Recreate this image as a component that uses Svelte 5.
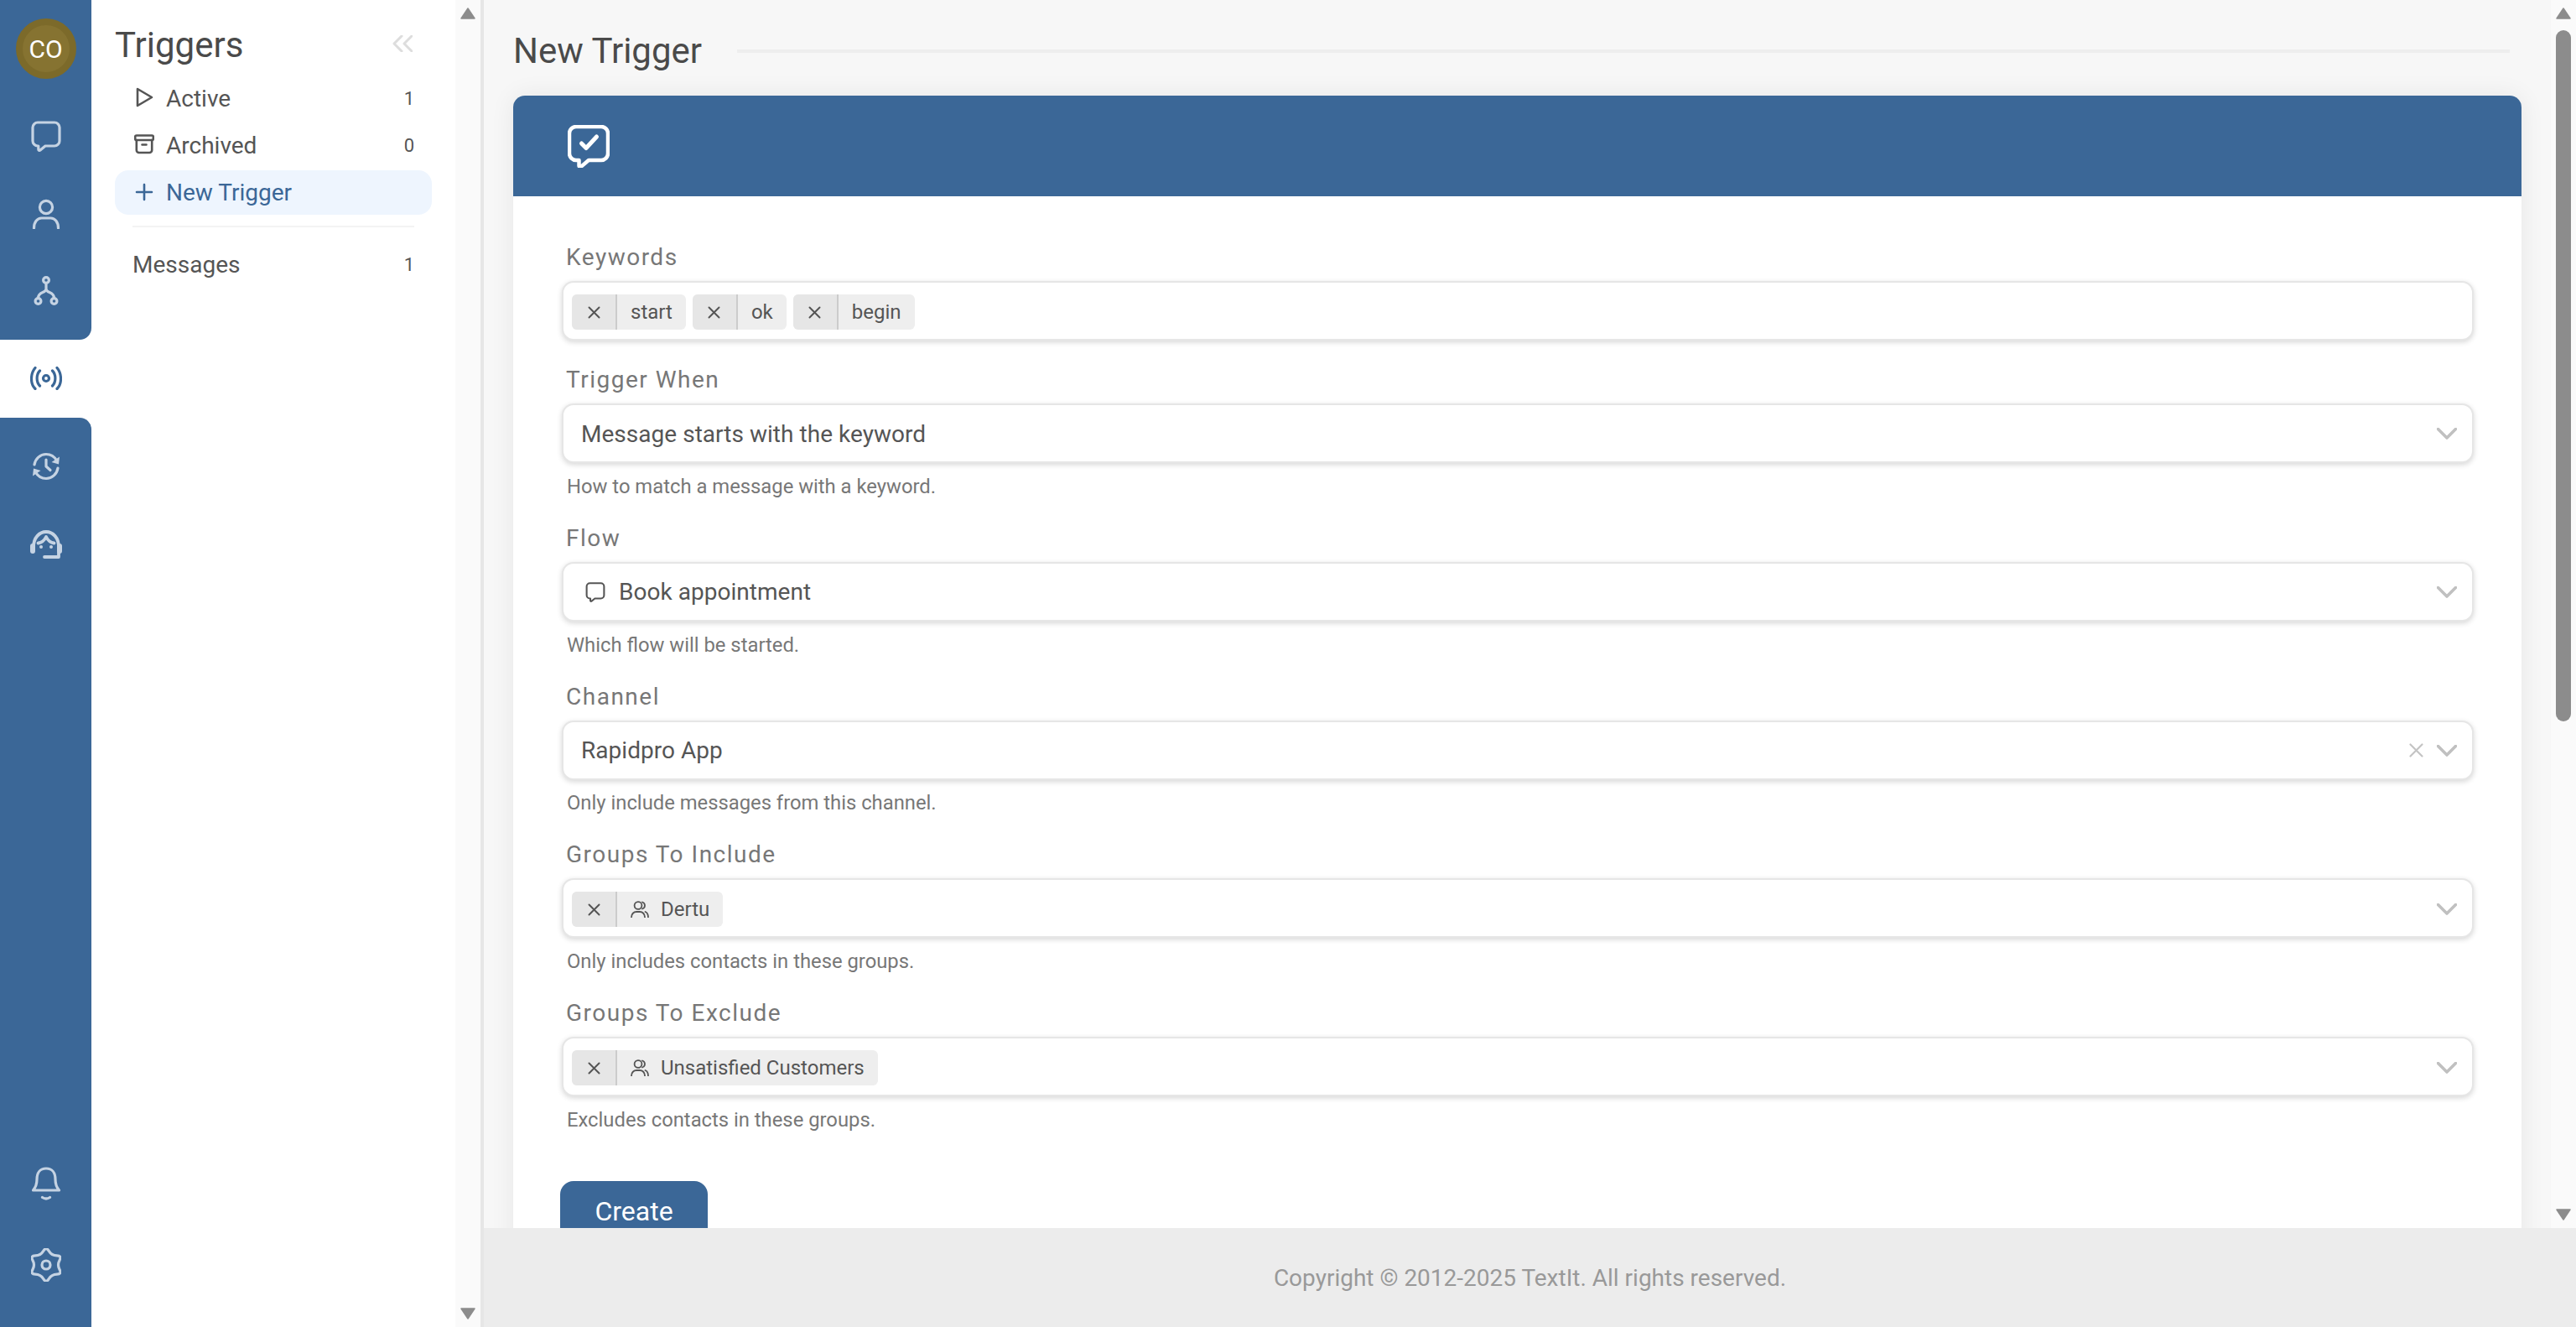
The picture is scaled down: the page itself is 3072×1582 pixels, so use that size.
<script lang="ts">
  // New Trigger page: icon rail, section menu, and the trigger form
  const fields = [
    { label: 'Keywords', chips: [{ text: 'start' }, { text: 'ok' }, { text: 'begin' }], noArrow: true },
    { label: 'Trigger When', value: 'Message starts with the keyword', help: 'How to match a message with a keyword.' },
    { label: 'Flow', value: 'Book appointment', flowIcon: true, help: 'Which flow will be started.' },
    { label: 'Channel', value: 'Rapidpro App', clear: true, help: 'Only include messages from this channel.' },
    { label: 'Groups To Include', chips: [{ text: 'Dertu', group: true }], help: 'Only includes contacts in these groups.' },
    { label: 'Groups To Exclude', chips: [{ text: 'Unsatisfied Customers', group: true }], help: 'Excludes contacts in these groups.' }
  ]

  // six lobed gear outline, as a quadratic spline through lobe/valley control points
  function gearPath(cx: number, cy: number, outer: number, inner: number) {
    const pts: number[][] = []
    for (let i = 0; i < 12; i++) {
      const r = i % 2 ? inner : outer
      const a = (i * Math.PI) / 6 - Math.PI / 2
      pts.push([cx + r * Math.cos(a), cy + r * Math.sin(a)])
    }
    const mid = (p: number[], q: number[]) => [(p[0] + q[0]) / 2, (p[1] + q[1]) / 2]
    const start = mid(pts[11], pts[0])
    let d = `M${start[0].toFixed(2)} ${start[1].toFixed(2)}`
    pts.forEach((p, i) => {
      const m = mid(p, pts[(i + 1) % 12])
      d += `Q${p[0].toFixed(2)} ${p[1].toFixed(2)} ${m[0].toFixed(2)} ${m[1].toFixed(2)}`
    })
    return d + 'Z'
  }
</script>

<div class="app">
  <nav class="rail">
    <div class="rail-top">
      <div class="avatar"><span>CO</span></div>
      <div class="rail-item">
        <svg width="36" height="37" viewBox="0 0 36 37"><path d="M8 2h20a6 6 0 0 1 6 6v16a6 6 0 0 1-6 6H17l-6 5c-1 .8-2.2.2-2.2-1v-4H8a6 6 0 0 1-6-6V8a6 6 0 0 1 6-6z" /></svg>
      </div>
      <div class="rail-item">
        <svg width="36" height="36" viewBox="0 0 36 36"><circle cx="18" cy="10" r="7.6" /><path d="M3.5 35c0-7.500 4-12 9-12h11c5 0 9 4.500 9 12" /></svg>
      </div>
      <div class="rail-item">
        <svg width="36" height="36" viewBox="0 0 36 36"><circle cx="18" cy="5" r="3.400" /><circle cx="8.500" cy="30" r="3.400" /><circle cx="27.500" cy="30" r="3.400" /><path d="M18 8.500v7c0 2-1.500 3-4 4s-5.500 3-5.500 7M18 15.500c0 2 1.500 3 4 4s5.500 3 5.500 7" /></svg>
      </div>
    </div>
    <div class="rail-active">
      <svg width="38" height="28" viewBox="0 0 38 28"><circle cx="19" cy="14" r="3.500" /><path d="M11.500 5C7 9.500 7 18.500 11.500 23M26.500 5c4.500 4.500 4.500 13.500 0 18M6 1.500C.500 8-.500 20 6 26.500M32 1.500c5.500 6.500 6.500 18.500 0 25" /></svg>
    </div>
    <div class="rail-rest">
      <div class="rail-item">
        <svg width="34" height="34" viewBox="0 0 34 34"><path d="M3 15C4 8 10 2.500 17 2.500c5.500 0 10 3 12.500 7.500M31 19c-1 7-7 12.500-14 12.500-5.500 0-10-3-12.500-7.500M17 9v8l5 4.500" /><path class="solid" d="M33 5.500l-1 9-8.500-2.500zM1 28.500l1-9 8.500 2.500z" /></svg>
      </div>
      <div class="rail-item">
        <svg class="support" width="38" height="34" viewBox="0 0 38 34"><path d="M4 20C4 9 11 2 19 2s15 7 15 18M34 26v6H17M9.500 15.500c4-.5 7.500-3.500 9.500-7.500 2 4 5.500 7 9.500 7.500" /><rect class="solid" x="0" y="16" width="6" height="12" rx="3" /><rect class="solid" x="32" y="16" width="6" height="12" rx="3" /><circle class="solid" cx="13" cy="20" r="2" /><circle class="solid" cx="25" cy="20" r="2" /></svg>
      </div>
      <div class="rail-bottom">
        <div class="rail-item tall">
          <svg width="36" height="40" viewBox="0 0 36 40"><path d="M2.500 28C6 24 7 21 7 15 7 7 11 2 18 2s11 5 11 13c0 6 1 9 4.500 13zM13.500 36.500c3 2 6 2 9 0" /></svg>
        </div>
        <div class="rail-item tall">
          <svg width="36" height="40" viewBox="0 0 36 40"><path d={gearPath(18, 20, 22, 13)} /><circle cx="18" cy="20" r="5" /></svg>
        </div>
      </div>
    </div>
  </nav>

  <aside class="side">
    <div class="side-body">
      <div class="side-title">
        <h2>Triggers</h2>
        <svg width="24" height="20" viewBox="0 0 24 20"><path d="M11 1L2 10l9 9M23 1l-9 9 9 9" /></svg>
      </div>
      <div class="menu-item">
        <span class="menu-icon"><svg width="24" height="24" viewBox="0 0 24 24"><path d="M4 2l17 10-17 10z" /></svg></span>
        <span class="menu-name">Active</span>
        <span class="count">1</span>
      </div>
      <div class="menu-item">
        <span class="menu-icon"><svg width="24" height="24" viewBox="0 0 24 24"><rect x="1.200" y="1.500" width="21.600" height="5.500" rx="1.500" /><path d="M2.800 7v12a3 3 0 0 0 3 3h12.400a3 3 0 0 0 3-3V7M9.500 12.500h5" /></svg></span>
        <span class="menu-name">Archived</span>
        <span class="count">0</span>
      </div>
      <div class="menu-item selected">
        <span class="menu-icon"><svg width="24" height="24" viewBox="0 0 24 24"><path d="M12 3v18M3 12h18" /></svg></span>
        <span class="menu-name">New Trigger</span>
      </div>
      <div class="side-divider"></div>
      <div class="menu-item plain">
        <span class="menu-name">Messages</span>
        <span class="count">1</span>
      </div>
    </div>
    <div class="vscroll">
      <svg class="arrow" width="18" height="14" viewBox="0 0 18 14"><path d="M9 1L17 13H1z" /></svg>
      <div class="grow"></div>
      <svg class="arrow" width="18" height="14" viewBox="0 0 18 14"><path d="M9 13L1 1h16z" /></svg>
    </div>
  </aside>

  <div class="main">
    <div class="main-view">
      <div class="main-content">
        <div class="page-title">
          <h1>New Trigger</h1>
          <div class="title-line"></div>
        </div>
        <section class="card">
          <header class="card-head">
            <svg width="50" height="51" viewBox="0 0 50 51"><path d="M10 2h30a8 8 0 0 1 8 8v24a8 8 0 0 1-8 8H25l-9 7.600c-1 .8-2.500.2-2.500-1V42H10a8 8 0 0 1-8-8V10a8 8 0 0 1 8-8z" /><path class="tick" d="M16.500 22l5.500 5.500L34.500 14" /></svg>
          </header>
          <form class="card-body">
            {#each fields as f}
              <div class="field">
                <div class="label">{f.label}</div>
                <div class="input" class:chipped={f.chips}>
                  {#if f.chips}
                    {#each f.chips as c}
                      <span class="chip">
                        <span class="chip-x"><svg width="15" height="15" viewBox="0 0 15 15"><path d="M1.500 1.500l12 12M13.500 1.500l-12 12" /></svg></span>
                        <span class="chip-text">
                          {#if c.group}
                            <svg width="22" height="20" viewBox="0 0 22 20"><circle cx="9" cy="5.500" r="4.400" /><path d="M1 19.500c0-4 2.800-6.500 6-6.500h4c3.200 0 6 2.500 6 6.500M14 1.500c2 .7 3 2.200 3 4s-1 3.300-3 4M17.500 13c2 .8 3.500 3 3.500 6.500" /></svg>
                          {/if}
                          {c.text}
                        </span>
                      </span>
                    {/each}
                  {:else}
                    {#if f.flowIcon}
                      <svg class="flow-icon" width="24" height="24" viewBox="0 0 36 37"><path d="M8 2h20a6 6 0 0 1 6 6v16a6 6 0 0 1-6 6H17l-6 5c-1 .8-2.200.2-2.200-1v-4H8a6 6 0 0 1-6-6V8a6 6 0 0 1 6-6z" /></svg>
                    {/if}
                    <span class="value">{f.value}</span>
                  {/if}
                  <span class="grow"></span>
                  {#if f.clear}
                    <svg class="clear" width="17" height="17" viewBox="0 0 17 17"><path d="M1.500 1.500l14 14M15.500 1.500l-14 14" /></svg>
                  {/if}
                  {#if !f.noArrow}
                    <svg class="chevron" width="24" height="14" viewBox="0 0 24 14"><path d="M1.500 1.500L12 12 22.500 1.500" /></svg>
                  {/if}
                </div>
                {#if f.help}<div class="help">{f.help}</div>{/if}
              </div>
            {/each}
            <button type="button" class="create">Create</button>
          </form>
        </section>
      </div>
      <div class="vscroll page">
        <svg class="arrow" width="18" height="14" viewBox="0 0 18 14"><path d="M9 1L17 13H1z" /></svg>
        <div class="thumb"></div>
        <div class="grow"></div>
        <svg class="arrow" width="18" height="14" viewBox="0 0 18 14"><path d="M9 13L1 1h16z" /></svg>
      </div>
    </div>
    <footer class="footer">Copyright © 2012-2025 TextIt. All rights reserved.</footer>
  </div>
</div>

<style>
  :global(body) { margin: 0; background: #fff; }
  .app { display: flex; width: 3072px; height: 1582px; overflow: hidden; font-family: Roboto, "Liberation Sans", sans-serif; font-size: 28px; color: #555; }
  .grow { flex: 1; }
  h1, h2 { margin: 0; font-weight: 400; font-size: 42px; line-height: 48px; color: #4a4a4a; }

  /* icon rail */
  .rail { width: 109px; flex: none; display: flex; flex-direction: column; }
  .rail svg { fill: none; stroke: #c5d3e3; stroke-width: 3.2; stroke-linecap: round; stroke-linejoin: round; }
  .rail svg .solid { fill: #c5d3e3; stroke: none; }
  .rail svg.support { stroke-width: 3.800; }
  .rail-top { height: 405px; box-sizing: border-box; padding-top: 22px; background: #3b6797; border-bottom-right-radius: 14px; }
  .avatar { width: 72px; height: 72px; margin: 0 auto 22px; box-sizing: border-box; border: 8px solid #7c6a2a; border-radius: 50%; background: #867331; color: #fff; display: flex; align-items: center; justify-content: center; font-size: 30px; }
  .rail-item { height: 92.5px; display: flex; align-items: center; justify-content: center; }
  .rail-item.tall { height: 97px; }
  .rail-active { height: 93px; padding-bottom: 1px; box-sizing: border-box; display: flex; align-items: center; justify-content: center; }
  .rail-active svg { stroke: #3b6797; }
  .rail-rest { flex: 1; display: flex; flex-direction: column; padding-top: 12px; background: #3b6797; border-top-right-radius: 14px; }
  .rail-bottom { margin-top: auto; padding-bottom: 26px; }

  /* section menu */
  .side { width: 468px; flex: none; box-sizing: border-box; display: flex; border-right: 4px solid #e6e6e6; }
  .side-body { flex: 1; box-sizing: border-box; padding: 30px 28px 0; }
  .side-title { display: flex; align-items: center; justify-content: space-between; padding-right: 23px; margin-bottom: 12.500px; }
  .side-title svg { margin-bottom: 4px; fill: none; stroke: #ddd; stroke-width: 3; stroke-linecap: round; stroke-linejoin: round; }
  .menu-item { height: 53px; margin-bottom: 3px; box-sizing: border-box; padding: 0 21px 0 23px; display: flex; align-items: center; border-radius: 16px; }
  .menu-item.selected { background: #eef5fe; color: #3b6797; }
  .menu-item.plain { padding-left: 21px; }
  .menu-icon { width: 24px; height: 24px; margin: 0 14px 3px 0; display: flex; }
  .menu-item.selected .menu-icon { margin-bottom: 0; }
  .menu-icon svg { fill: none; stroke: currentColor; stroke-width: 2.600; stroke-linecap: round; stroke-linejoin: round; }
  .menu-name { flex: 1; }
  .count { font-size: 22px; color: #555; }
  .side-divider { height: 2px; margin: 13px 21px 18px; background: #f3f3f3; }

  /* scrollbars */
  .vscroll { width: 30px; flex: none; box-sizing: border-box; padding: 9px 0 9px; display: flex; flex-direction: column; align-items: center; background: #fafafa; }
  .arrow { fill: #8c8c8c; stroke: #8c8c8c; stroke-width: 1.500; stroke-linejoin: round; flex: none; }
  .thumb { width: 18px; height: 824px; margin-top: 13px; border-radius: 9px; background: #8c8c8c; }

  /* page */
  .main { flex: 1; min-width: 0; display: flex; flex-direction: column; }
  .main-view { height: 1464px; flex: none; display: flex; overflow: hidden; }
  .main-content { flex: 1; min-width: 0; box-sizing: border-box; padding: 37px 35px 0; background: #f7f7f7; overflow: hidden; }
  .page-title { display: flex; align-items: center; gap: 42px; margin-bottom: 29px; padding-right: 14px; }
  .title-line { flex: 1; height: 4px; background: #eee; }
  .card { border-radius: 14px; background: #fff; box-shadow: 0 0 30px rgba(0, 0, 0, 0.07); }
  .card-head { height: 120px; box-sizing: border-box; padding-left: 65px; display: flex; align-items: center; background: #3b6797; border-radius: 14px 14px 0 0; }
  .card-head svg { fill: none; stroke: #fff; stroke-width: 4.500; stroke-linecap: round; stroke-linejoin: round; }
  .card-head svg .tick { stroke-width: 5; }
  .card-body { padding: 57px 57px 40px 58px; }

  /* form */
  .field { margin-bottom: 31px; }
  .label { padding-left: 5px; margin-bottom: 12px; line-height: 32px; letter-spacing: 1.500px; color: #777; }
  .input { height: 71px; box-sizing: border-box; padding: 1px 18px 0 21px; display: flex; align-items: center; gap: 8px; background: #fff; border: 2px solid #e6e6e6; border-radius: 14px; box-shadow: 0 2px 6px rgba(0, 0, 0, 0.16); }
  .input.chipped { padding: 3px 18px 0 10px; }
  .value { color: #555; letter-spacing: 0.030px; }
  .flow-icon { margin: 0 8px 0 5px; fill: none; stroke: #555; stroke-width: 3.200; stroke-linecap: round; stroke-linejoin: round; }
  .clear { margin-right: 8px; fill: none; stroke: #c4c4c4; stroke-width: 2.200; stroke-linecap: round; }
  .chevron { fill: none; stroke: #c0c0c0; stroke-width: 3.600; stroke-linecap: round; stroke-linejoin: round; }
  .chip { height: 42px; display: flex; font-size: 24px; border-radius: 6px; overflow: hidden; background: #eee; }
  .chip-x { width: 54px; box-sizing: border-box; display: flex; align-items: center; justify-content: center; background: #e6e6e6; border-right: 2px solid #ccc; }
  .chip-x svg { fill: none; stroke: #555; stroke-width: 2; stroke-linecap: round; }
  .chip-text { padding: 0 16px; display: flex; align-items: center; gap: 14px; }
  .chip-text svg { fill: none; stroke: #555; stroke-width: 1.800; stroke-linecap: round; stroke-linejoin: round; }
  .help { padding: 0 0 1px 6px; margin-top: 13.750px; line-height: 28px; font-size: 23.800px; color: #777; }
  .create { display: block; width: 176px; height: 72px; margin: 58px 0 0 -2px; padding: 0; border: 0; border-radius: 16px; background: #3b6797; color: #fff; font: 400 32px Roboto, "Liberation Sans", sans-serif; }

  .footer { flex: 1; display: flex; align-items: center; justify-content: center; background: #ececec; color: #999; }
</style>
